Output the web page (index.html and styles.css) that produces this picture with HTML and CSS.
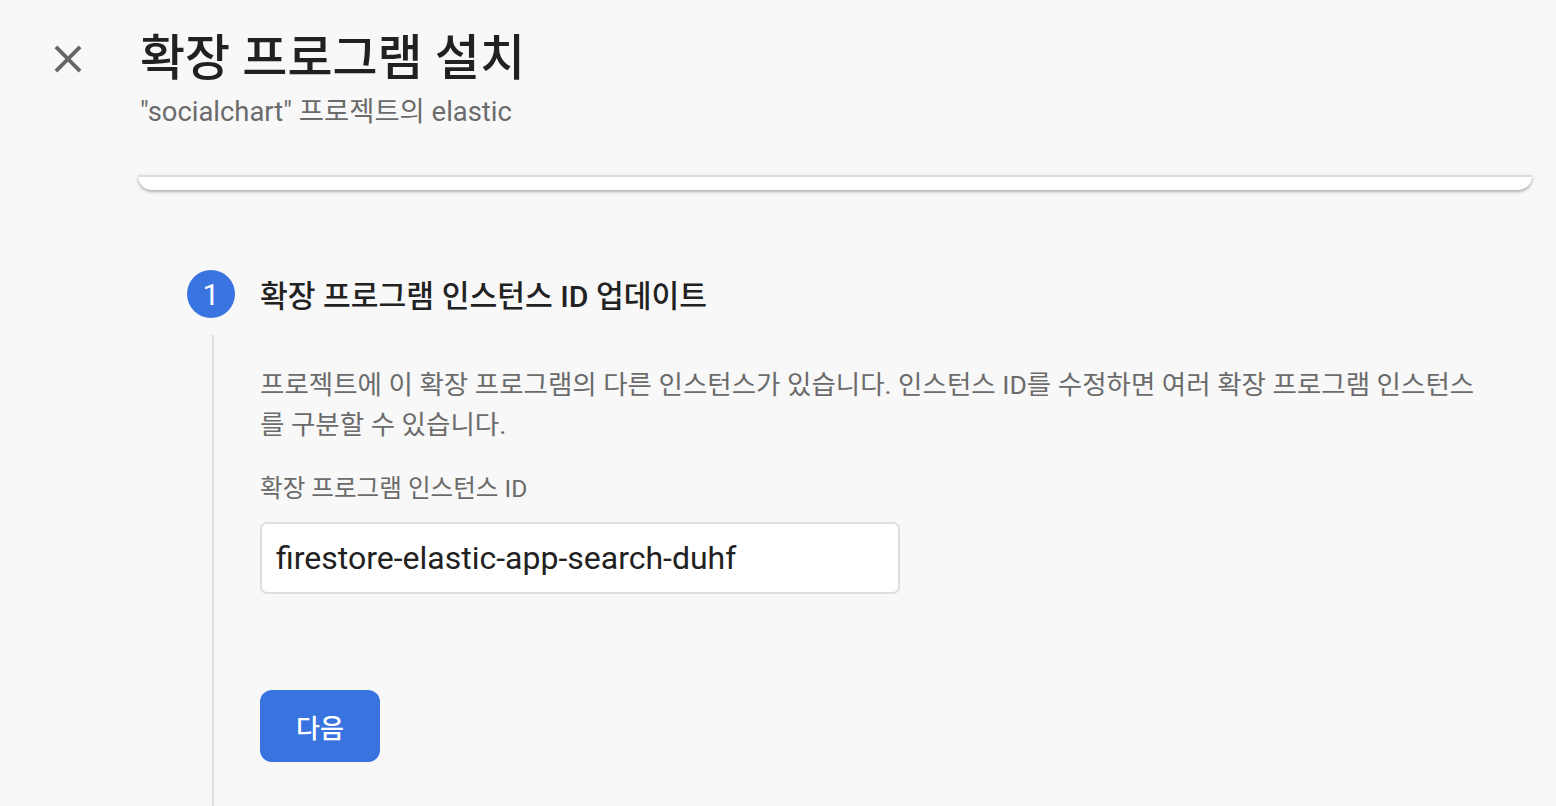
FILE: index.html
```html
<!DOCTYPE html>
<html lang="ko">
<head>
<meta charset="utf-8">
<title>확장 프로그램 설치</title>
<link rel="stylesheet" href="styles.css">
</head>
<body>
<div class="page">
  <header class="header">
    <button class="close" aria-label="닫기">
      <svg viewBox="0 0 24 24" width="46" height="46"><path d="M19 6.41L17.59 5 12 10.59 6.41 5 5 6.41 10.59 12 5 17.59 6.41 19 12 13.41 17.59 19 19 17.59 13.41 12z" fill="currentColor"/></svg>
    </button>
    <div class="titles">
      <h1 class="title">확장 프로그램 설치</h1>
      <div class="subtitle">"socialchart" 프로젝트의 elastic</div>
    </div>
  </header>

  <div class="card-tail"></div>

  <section class="stepper">
    <div class="step-head">
      <div class="step-num">1</div>
      <h2 class="step-title">확장 프로그램 인스턴스 ID 업데이트</h2>
    </div>
    <div class="step-body">
      <p class="desc">프로젝트에 이 확장 프로그램의 다른 인스턴스가 있습니다. 인스턴스 ID를 수정하면 여러 확장 프로그램 인스턴스를 구분할 수 있습니다.</p>
      <label class="field-label" for="iid">확장 프로그램 인스턴스 ID</label>
      <div class="field">firestore-elastic-app-search-duhf</div>
      <button class="next">다음</button>
    </div>
  </section>
</div>
</body>
</html>
```
FILE: styles.css
```css
html, body {
  margin: 0;
  padding: 0;
  background: #f8f8f8;
  height: 100%;
  overflow: hidden;
}
body {
  font-family: Roboto, "Noto Sans CJK KR", sans-serif;
  color: #212121;
}
.page {
  height: 806px;
  display: flex;
  flex-direction: column;
}
.header {
  display: flex;
  align-items: flex-start;
  padding: 36px 0 0 45px;
  height: 139px;
}
.close {
  border: 0;
  background: none;
  padding: 0;
  margin: 0;
  color: #666;
  width: 46px;
  height: 46px;
  display: block;
}
.close svg { display: block; }
.titles {
  margin-left: 49px;
  margin-top: -9px;
}
.title {
  margin: 0;
  font-size: 49px;
  line-height: 64px;
  font-weight: 500;
  color: #212121;
}
.subtitle {
  font-size: 27.4px;
  line-height: 34px;
  color: #6b6b6b;
  margin-top: 4px;
}
.card-tail {
  margin: 0 24px 0 138px;
  height: 13px;
  background: #fff;
  border-top: 2px solid #dcdcdc;
  border-radius: 0 0 14px 14px;
  box-shadow: 0 2px 3px rgba(0,0,0,0.25), 0 1px 6px rgba(0,0,0,0.06);
}
.stepper {
  padding-left: 187px;
  margin-top: 80px;
  flex: 1;
  display: flex;
  flex-direction: column;
}
.step-head {
  display: flex;
  align-items: center;
  gap: 25px;
}
.step-num {
  width: 48px;
  height: 48px;
  border-radius: 50%;
  background: #3a74e0;
  color: #fff;
  font-size: 30px;
  display: flex;
  align-items: center;
  justify-content: center;
  font-weight: 400;
}
.step-title {
  margin: 0;
  font-size: 30.2px;
  font-weight: 500;
  color: #222;
}
.step-body {
  margin-left: 25px;
  margin-top: 17px;
  border-left: 2px solid #dedede;
  padding: 30px 60px 0 46px;
  flex: 1;
}
.desc {
  margin: 0;
  font-size: 26.5px;
  line-height: 40px;
  color: #6b6b6b;
  max-width: 1226px;
}
.field-label {
  display: block;
  margin-top: 28px;
  font-size: 24.6px;
  line-height: 32px;
  color: #6b6b6b;
}
.field {
  margin-top: 17px;
  width: 640px;
  height: 72px;
  box-sizing: border-box;
  background: #fff;
  border: 2px solid #dedede;
  border-radius: 7px;
  padding: 0 14px;
  display: flex;
  align-items: center;
  font-size: 32px;
  color: #212121;
}
.next {
  display: block;
  margin-top: 96px;
  width: 120px;
  height: 72px;
  border: 0;
  border-radius: 12px;
  background: #3873e0;
  color: #fff;
  font-family: Roboto, "Noto Sans CJK KR", sans-serif;
  font-size: 26px;
  font-weight: 500;
}
```
